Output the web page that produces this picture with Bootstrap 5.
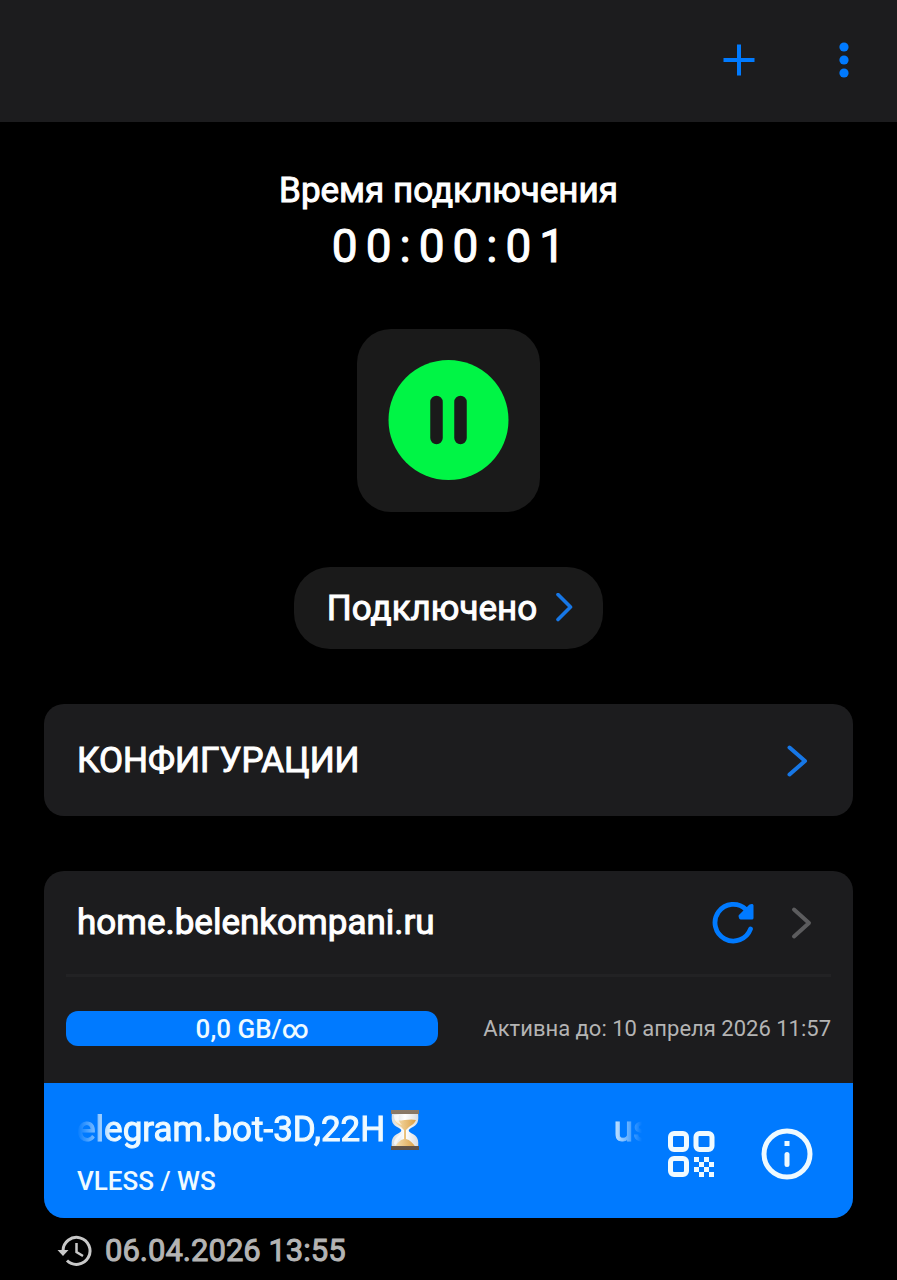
<!DOCTYPE html>
<html lang="ru" data-bs-theme="dark">
<head>
<meta charset="utf-8">
<meta name="viewport" content="width=device-width, initial-scale=1">
<title>VPN</title>
<link href="https://cdn.jsdelivr.net/npm/bootstrap@5.3.0/dist/css/bootstrap.min.css" rel="stylesheet">
<style>
  :root { --accent: #007aff; --panel: #1c1c1e; --muted: #b4b4b4; }
  body { background: #000; color: #fff; font-family: Roboto, "Noto Sans", sans-serif; font-size: 35px; line-height: 44px; -webkit-text-stroke: 1px currentColor; }
  svg { display: block; flex: none; }
  .btn { --bs-btn-padding-x: 0; --bs-btn-padding-y: 0; --bs-btn-border-width: 0; --bs-btn-color: #fff; font-size: inherit; line-height: inherit; -webkit-text-stroke: inherit; }
  .topbar { background: var(--panel); height: 122px; padding: 0 28px 2px 0; gap: 55px; }
  .topbar .btn { width: 50px; height: 50px; }
  .screen { padding: 47px 44px 0; }
  .timer { font-size: 46px; line-height: 66px; letter-spacing: 8px; padding-left: 8px; }
  .power { background: #1a1a1a; border-radius: 34px; width: 183px; height: 183px; margin-top: 50px; }
  .status-pill { background: #1a1a1a; --bs-btn-border-radius: 36px; height: 82px; padding: 2px 28px 0 33px; gap: 14px; margin-top: 55px; }
  .panel { background: var(--panel); border-radius: 20px; margin-top: 55px; }
  .configs { height: 112px; padding: 2px 44px 0 33px; }
  .sub-head { height: 103px; padding: 0 40px 0 33px; }
  .sub-actions { gap: 34px; }
  .rule { height: 3px; margin: 0 22px; background: #222224; }
  .usage { padding: 34px 22px 37px; gap: 45px; }
  .quota { height: 35px; border-radius: 12px; background: var(--accent); font-size: 26px; line-height: 35px; flex: 1 1 0; }
  .quota .progress-bar { background: var(--accent); overflow: visible; font-weight: 500; color: #effaff; padding-top: 2px; -webkit-text-stroke-width: 0; }
  .expiry { color: var(--muted); font-size: 22px; line-height: 35px; -webkit-text-stroke-width: 0; }
  .server { background: var(--accent); border-radius: 0 0 20px 20px; height: 135px; padding: 0 40px 0 33px; gap: 16px; color: #effaff; }
  .marquee { height: 54px; line-height: 54px; -webkit-mask-image: linear-gradient(90deg, transparent, #000 36px, #000 calc(100% - 42px), transparent calc(100% - 9px)); }
  .proto { font-size: 26px; line-height: 36px; margin-top: 6px; font-weight: 500; -webkit-text-stroke-width: 0; }
  .server-actions { gap: 46px; margin-top: 6px; }
  .updated { color: var(--muted); font-size: 31px; line-height: 44px; padding: 11px 13px 0; gap: 12px; }
</style>
</head>
<body>
<header class="topbar d-flex align-items-center justify-content-end">
  <button class="btn d-flex align-items-center justify-content-center" type="button" aria-label="Добавить">
    <svg width="32" height="32" viewBox="0 0 32 32" stroke="#007aff" stroke-width="4"><path d="M16 .5v31M.5 16h31"/></svg>
  </button>
  <button class="btn d-flex align-items-center justify-content-center" type="button" aria-label="Меню">
    <svg width="12" height="36" viewBox="0 0 12 36" fill="#007aff"><circle cx="6" cy="5" r="4.6"/><circle cx="6" cy="18" r="4.6"/><circle cx="6" cy="31" r="4.6"/></svg>
  </button>
</header>

<main class="screen">
  <section class="d-flex flex-column align-items-center text-center">
    <div>Время подключения</div>
    <div class="timer">00:00:01</div>
    <button class="btn power d-flex align-items-center justify-content-center" type="button" aria-label="Пауза">
      <svg width="121" height="121" viewBox="0 0 121 121"><circle cx="60.500" cy="60" r="60" fill="#00f545"/><path d="M48.500 42v36M72.500 42v36" stroke="#1a1a1a" stroke-width="12.500" stroke-linecap="round"/></svg>
    </button>
    <button class="btn status-pill d-flex align-items-center" type="button">
      <span>Подключено</span>
      <svg width="24" height="32" viewBox="0 0 24 32" fill="none" stroke="#1777e6" stroke-width="3.600" stroke-linecap="round" stroke-linejoin="round"><path d="M7 1.500l12.500 12.500L7 26.500"/></svg>
    </button>
  </section>

  <button class="btn panel configs d-flex align-items-center justify-content-between w-100 text-start" type="button">
    <span>КОНФИГУРАЦИИ</span>
    <svg width="24" height="36" viewBox="0 0 24 36" fill="none" stroke="#1777e6" stroke-width="4" stroke-linecap="round" stroke-linejoin="round"><path d="M4.500 4.500l15.500 13.500L4.500 31.500"/></svg>
  </button>

  <section class="panel">
    <div class="sub-head d-flex align-items-center justify-content-between">
      <span>home.belenkompani.ru</span>
      <div class="sub-actions d-flex align-items-center">
        <button class="btn" type="button" aria-label="Обновить">
          <svg width="44" height="44" viewBox="0 0 44 44" fill="none" stroke="#007aff" stroke-width="4.800" stroke-linecap="round" stroke-linejoin="round"><path d="M39.500 28A18.300 18.300 0 1 1 35 8.500"/><path fill="#007aff" stroke-width="3" d="M41 4.500V17H29.500l-.5-2L39 5z"/></svg>
        </button>
        <button class="btn" type="button" aria-label="Открыть">
          <svg width="24" height="36" viewBox="0 0 24 36" fill="none" stroke="#5c5c5e" stroke-width="4" stroke-linecap="round" stroke-linejoin="round"><path d="M5 4.500l15 13.500L5 31.500"/></svg>
        </button>
      </div>
    </div>
    <div class="rule"></div>
    <div class="usage d-flex align-items-center">
      <div class="progress quota" role="progressbar" aria-label="Трафик"><div class="progress-bar w-100">0,0 GB/∞</div></div>
      <div class="expiry text-nowrap">Активна до: 10 апреля 2026 11:57</div>
    </div>
    <div class="server d-flex align-items-center">
      <div class="flex-grow-1">
        <div class="marquee d-flex align-items-center">
          <span>elegram.bot-3D,22H</span>
          <svg width="40" height="44" viewBox="0 0 40 44" role="img" aria-label="Песочные часы">
            <defs>
              <linearGradient id="cap" x2="0" y2="1"><stop stop-color="#8b7a68"/><stop offset="1" stop-color="#5d5148"/></linearGradient>
              <linearGradient id="glass"><stop stop-color="#d5dade"/><stop offset=".5" stop-color="#fff"/><stop offset="1" stop-color="#d8dce0"/></linearGradient>
              <linearGradient id="sand"><stop stop-color="#f8e3b8"/><stop offset="1" stop-color="#dca145"/></linearGradient>
            </defs>
            <path fill="url(#glass)" d="M7 5h26c1 8 0 12-7 15-3 2-3 3 0 5 7 3 8 7 7 15H7c-1-8 0-12 7-15 3-2 3-3 0-5C7 17 6 13 7 5z"/>
            <path fill="url(#sand)" d="M9 12c6 2 15-2 22 0-1 3-4 5-7 7l-3 3v9c4 1 7 4 9.500 8H10c2-4 5-7 9-8v-9l-3-3c-3-2-6-4-7-7z"/>
            <path fill="#fff" opacity=".65" d="M9 7h5c-1 5 0 7 3 10-6-2-8-5-8-10zM9 36c0-5 3-8 8-10-2 4-5 7-6 11z"/>
            <path fill="url(#cap)" d="M6 2h28v4H6zM6 38h28v4H6z"/>
          </svg>
          <span class="ms-auto">us</span>
        </div>
        <div class="proto">VLESS / WS</div>
      </div>
      <div class="server-actions d-flex align-items-center">
        <button class="btn" type="button" aria-label="QR-код">
          <svg width="48" height="48" viewBox="0 0 48 48" fill="none" stroke="#effaff" stroke-width="5"><rect x="3.500" y="3.500" width="16" height="16" rx="3.500"/><rect x="29" y="3.500" width="16" height="16" rx="3.500"/><rect x="3.500" y="28.500" width="16" height="16" rx="3.500"/><path stroke="none" fill="#effaff" d="M27 27h5v5h-5zM37 27h5v5h-5zM32 32h5v5h-5zM42 32h5v5h-5zM27 37h5v5h-5zM37 37h5v5h-5zM32 42h5v5h-5zM42 42h5v5h-5z"/></svg>
        </button>
        <button class="btn" type="button" aria-label="Информация">
          <svg width="52" height="52" viewBox="0 0 52 52" fill="none" stroke="#effaff" stroke-width="5"><circle cx="26" cy="26" r="23"/><path d="M26 13v5"/><path stroke-linecap="round" d="M26 26.500v10"/></svg>
        </button>
      </div>
    </div>
  </section>

  <div class="updated d-flex align-items-center">
    <svg width="36" height="34" viewBox="0 0 36 34" fill="none" stroke="#c8c8c8" stroke-width="3"><path d="M6 17a13.500 13.500 0 1 1 4 9.500"/><path fill="#c8c8c8" stroke="none" d="M.5 16h11l-5.500 6z"/><path stroke-width="2.500" d="M19.500 9v9l6.500 4"/></svg>
    <span>06.04.2026 13:55</span>
  </div>
</main>
<script src="https://cdn.jsdelivr.net/npm/bootstrap@5.3.0/dist/js/bootstrap.bundle.min.js"></script>
</body>
</html>
